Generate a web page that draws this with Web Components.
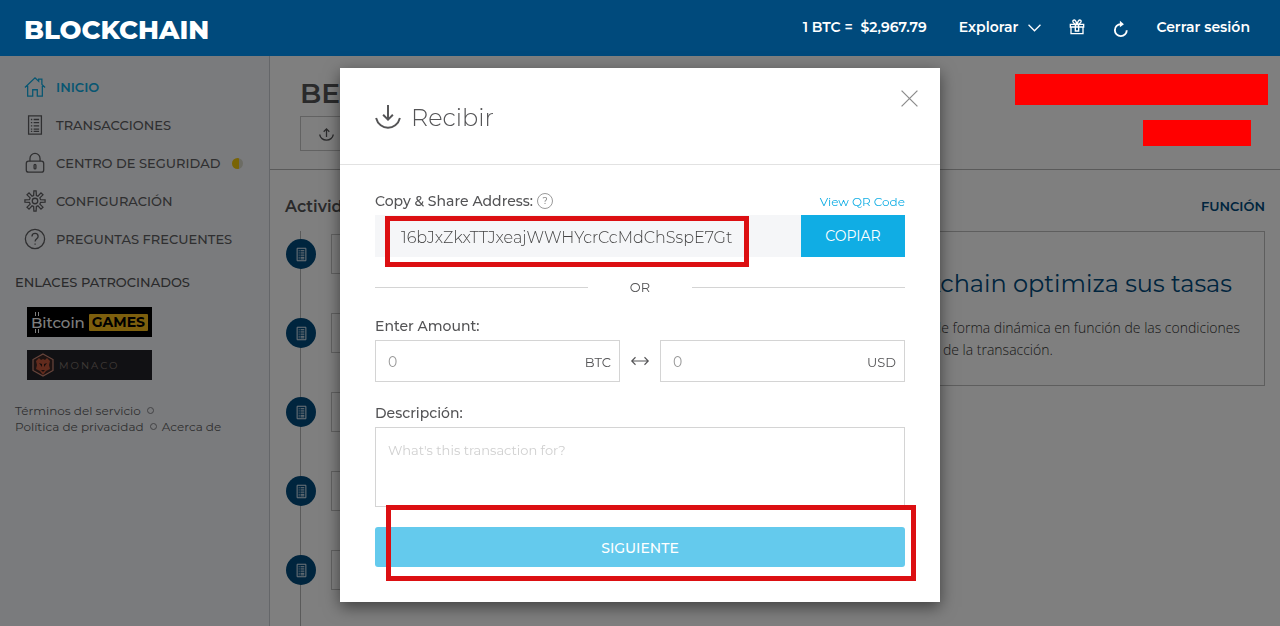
<!DOCTYPE html>
<html lang="es">
<head>
<meta charset="utf-8">
<meta name="viewport" content="width=device-width, initial-scale=1">
<title>Blockchain Wallet</title>
<style>
  html, body { margin: 0; height: 100%; }
  body {
    font-family: Montserrat, Inter, "Liberation Sans", sans-serif;
    font-size: 14px;
    color: #545456;
    background: #fff;
    overflow: hidden;
  }
</style>
</head>
<body>
<wallet-app></wallet-app>

<script>
const define = (name, markup, setup) => {
  const template = document.createElement('template');
  template.innerHTML = '<style>*,*::before{box-sizing:border-box}</style>' + markup;
  customElements.define(name, class extends HTMLElement {
    constructor() {
      super();
      this.attachShadow({ mode: 'open' }).append(template.content.cloneNode(true));
    }
    connectedCallback() { if (setup) setup(this, this.shadowRoot); }
  });
};

const icons = {
  home: '<path d="M1 12.500 12 2l4 3.800V3.500h3.500v5.600L23 12.500M4 10.500V22h5.500v-7h5v7H20V10.500"/>',
  list: '<path d="M5 2h14v20H5z"/><path d="M7.500 6H9m1.500 0h6M7.500 9.500H9m1.500 0h6M7.500 13H9m1.500 0h6M7.500 16.500H9m1.500 0h6M7.500 19h1.500m1.500 0h6"/>',
  lock: '<rect x="2.500" y="10" width="19" height="12" rx="2.500"/><path d="M6.500 10V7a5.500 5.500 0 0 1 11 0v3"/><rect x="11" y="13.500" width="2" height="5" rx="1"/>',
  gear: '<circle cx="12" cy="12" r="3"/><path d="M10.500 6 10.800 1h2.400l.3 5 1.700.7 3.300-3.600 2.200 2.200-3.400 3.300.8 1.900 4.900.3v2.400l-4.900.3-.8 1.900 3.400 3.300-2.200 2.200-3.300-3.600-1.700.7-.3 5h-2.400l-.3-5-1.700-.7-3.300 3.600-2.200-2.200 3.400-3.300-.8-1.900L1 13.200v-2.400l4.900-.3.8-1.900-3.400-3.300 2.200-2.200 3.300 3.600z"/>',
  help: '<circle cx="12" cy="12" r="10.500"/><path d="M8.700 9.200c0-4.300 6.700-4.300 6.700 0 0 2.500-3.300 2.600-3.300 5.600M12.100 17v1.200"/>',
  receive: '<path d="M1 12c3 12 19 12 22 0M12 0v13M7.500 9 12 13.500 16.500 9"/>',
  send: '<path d="M1 12c3 12 19 12 22 0M12 16V3M7.500 7.500 12 3l4.500 4.500"/>',
  close: '<path d="M2 2l20 20M22 2 2 22"/>',
  chevron: '<path d="M1 7l11 11L23 7"/>',
  gift: '<path d="M2 8h20v4H2zM3 12v10h18V12M9.500 8v10h5V8M12 8C6 8 4 2 7.500 1.500 10 1 12 8 12 8s2-7 4.500-6.500C20 2 18 8 12 8"/>',
  refresh: '<path d="M22 13a9.500 9.500 0 1 1-9.500-9.500"/><path d="M11 -2v10.500l6.500-5z" fill="currentColor" stroke="none"/>',
  swap: '<path d="M1 12h22M6 7l-5 5 5 5M18 7l5 5-5 5"/>'
};

/* Line icon; size and stroke come from custom properties. */
define('ui-icon', `
  <style>
    :host { display: inline-block; flex: none; width: var(--size, 24px); height: var(--size, 24px); }
    svg { display: block; width: 100%; height: 100%; fill: none; stroke: currentColor; stroke-width: var(--stroke, 1.5); overflow: visible; }
  </style>
  <svg viewBox="0 0 24 24" aria-hidden="true"></svg>`,
  (el, root) => { root.querySelector('svg').innerHTML = icons[el.getAttribute('name')]; });

define('top-bar', `
  <style>
    :host { display: block; position: relative; z-index: 20; background: #004a7c; color: #fff; }
    header { display: flex; align-items: center; justify-content: space-between; height: 56px; padding: 0 30px 0 24px; }
    a { color: inherit; text-decoration: none; }
    .logo { font-size: 26px; font-weight: 800; line-height: 32px; padding-top: 4px; }
    nav { display: flex; align-items: center; font-weight: 600; padding-bottom: 2px; }
    .rate { margin-right: 32px; white-space: pre; }
    button { display: flex; align-items: center; gap: 10px; padding: 0; border: 0; background: none; color: inherit; font: inherit; cursor: pointer; }
    .explore { margin-right: 28px; }
    .gift { margin-right: 28px; }
    .refresh { margin-right: 28px; padding-top: 4px; }
  </style>
  <header>
    <a class="logo" href="#">BLOCKCHAIN</a>
    <nav>
      <span class="rate">1 BTC =  $2,967.79</span>
      <button class="explore">Explorar <ui-icon name="chevron" style="--size:13px;--stroke:2.400"></ui-icon></button>
      <button class="gift" aria-label="Novedades"><ui-icon name="gift" style="--size:16px;--stroke:2"></ui-icon></button>
      <button class="refresh" aria-label="Actualizar"><ui-icon name="refresh" style="--size:15px;--stroke:3"></ui-icon></button>
      <a href="#">Cerrar sesión</a>
    </nav>
  </header>`);

define('nav-item', `
  <style>
    :host { display: block; color: #5f5f62; font-size: 13px; white-space: nowrap; }
    :host([active]) { color: #10ade4; }
    a { display: flex; align-items: center; gap: 10px; height: 38px; color: inherit; text-decoration: none; font-weight: 500; }
    :host([active]) a { font-weight: 600; }
    ui-icon { --size: 22px; --stroke: 1.400; }
  </style>
  <a href="#"><ui-icon></ui-icon><slot></slot></a>`,
  (el, root) => {
    const icon = root.querySelector('ui-icon');
    icon.shadowRoot.querySelector('svg').innerHTML = icons[el.getAttribute('icon')];
  });

define('side-bar', `
  <style>
    :host { display: block; background: #f5f7fb; border-right: 1px solid #c9ccd2; padding: 12px 14px 0 15px; }
    nav { padding-left: 9px; }
    .dot { width: 11px; height: 11px; border-radius: 50%; margin-left: 2px; background: linear-gradient(90deg, #f2c80c 65%, #d8d8c8 65%); }
    h2 { margin: 14px 0 15px; font-size: 13px; line-height: 20px; font-weight: 500; color: #545456; }
    .ads { display: flex; flex-direction: column; gap: 13px; padding-left: 12px; }
    .ads a { display: flex; align-items: center; width: 125px; height: 30px; text-decoration: none; background: #000; color: #fff; }
    .games { justify-content: space-between; padding: 0 4px; font-size: 15px; font-weight: 500; }
    .coin { padding: 1px 0;
      background: linear-gradient(#fff, #fff) 4px 0 / 1px 4px no-repeat, linear-gradient(#fff, #fff) 7px 0 / 1px 4px no-repeat,
        linear-gradient(#fff, #fff) 4px 100% / 1px 4px no-repeat, linear-gradient(#fff, #fff) 7px 100% / 1px 4px no-repeat; }
    .games b { background: #fabf1a; color: #000; font-size: 14px; line-height: 17px; padding: 0 3px; font-weight: 700; border-radius: 1px; }
    .ads .monaco { background: #222328; color: #837670; gap: 5px; padding-left: 5px; font-size: 10px; letter-spacing: 2px; }
    svg { flex: none; display: block; }
    footer { margin-top: 23px; font-size: 12px; line-height: 16px; color: #5f5f62; }
    footer a { color: inherit; text-decoration: none; }
    footer i { display: inline-block; width: 7px; height: 7px; border: 1px solid #85858a; border-radius: 50%; margin: 0 5px 1px 3px; }
  </style>
  <nav>
    <nav-item icon="home" active>INICIO</nav-item>
    <nav-item icon="list">TRANSACCIONES</nav-item>
    <nav-item icon="lock">CENTRO DE SEGURIDAD<span class="dot"></span></nav-item>
    <nav-item icon="gear">CONFIGURACIÓN</nav-item>
    <nav-item icon="help">PREGUNTAS FRECUENTES</nav-item>
  </nav>
  <h2>ENLACES PATROCINADOS</h2>
  <div class="ads">
    <a class="games" href="#"><span class="coin">Bitcoin</span><b>GAMES</b></a>
    <a class="monaco" href="#">
      <svg width="22" height="24" viewBox="0 0 22 24" aria-hidden="true">
        <path d="M11 1l10 5.500v11L11 23 1 17.500v-11z" fill="#3a2624" stroke="#d08a78" stroke-width="1.200"/>
        <path d="M4 8l3-3 2 2 2-1 2 1 2-2 3 3-1 4 1 4-4 2-3 4-3-4-4-2 1-4z" fill="#c4573b"/>
        <path d="M7 10l3 1v3zM15 10l-3 1v3zM9 17h4l-2 2z" fill="#2a1a18"/>
      </svg>
      <span>MONACO</span>
    </a>
  </div>
  <footer>
    <a href="#">Términos del servicio</a> <i></i><br>
    <a href="#">Política de privacidad</a> <i></i><a href="#">Acerca de</a>
  </footer>`);

/* Timeline of recent transactions. */
define('activity-feed', `
  <style>
    :host { display: block; flex: 1; min-height: 0; }
    ul { display: flex; flex-direction: column; gap: 39px; list-style: none; margin: 0; padding: 3px 0 0 1px; height: 100%;
      background: linear-gradient(#b4b4b4, #b4b4b4) 15px 0 / 1px 100% no-repeat; }
    li { display: flex; align-items: center; gap: 15px; }
    .badge { display: grid; place-items: center; width: 30px; height: 30px; border-radius: 50%; background: #004a7c; color: #e4eef6; }
    .entry { flex: 1; height: 40px; border: 1px solid #c4c4c4; }
    ui-icon { --size: 15px; --stroke: 1.600; }
  </style>
  <ul></ul>`,
  (el, root) => {
    root.querySelector('ul').innerHTML =
      '<li><span class="badge"><ui-icon name="list"></ui-icon></span><span class="entry"></span></li>'.repeat(5);
  });

define('feature-card', `
  <style>
    :host { display: flex; flex-direction: column; align-items: flex-end; height: 155px; padding: 36px 24px 0 0; border: 1px solid #bcbcbc; }
    ::slotted(h2) { margin: 0 8px 0 0; font-size: 24px; line-height: 32px; font-weight: 400; color: #004a7c; white-space: nowrap; }
    ::slotted(p) { margin: 17px 0 0; font-family: "Open Sans", sans-serif; font-weight: 300; font-size: 14px; line-height: 22px; color: #333; white-space: nowrap; }
  </style>
  <slot></slot>`);

define('home-view', `
  <style>
    :host { display: flex; flex-direction: column; min-width: 0; }
    .head { display: flex; justify-content: space-between; height: 114px; padding: 18px 12px 0 30px; border-bottom: 1px solid #b4b4b4; }
    h1 { margin: 0 0 4px; font-size: 28px; line-height: 38px; font-weight: 600; }
    .send { display: flex; align-items: center; width: 120px; height: 35px; padding: 2px 0 0 18px; border: 1px solid #c4c4c4; background: none; color: inherit; }
    .send ui-icon { --size: 15px; --stroke: 2; }
    .balance { display: flex; flex-direction: column; align-items: flex-end; gap: 15px; position: relative; z-index: 11; }
    .balance span { background: #f00; }
    .total { width: 253px; height: 31px; }
    .fiat { width: 108px; height: 26px; margin-right: 17px; }
    .body { flex: 1; display: grid; grid-template-columns: 1fr 1fr; gap: 30px; padding: 24px 15px 0 15px; min-height: 0; }
    section { display: flex; flex-direction: column; min-width: 0; }
    .title { margin: 0 0 12px; font-size: 16px; line-height: 25px; font-weight: 600; }
    .right .title { text-align: right; font-size: 13px; color: #004a7c; font-weight: 600; }
  </style>
  <div class="head">
    <div>
      <h1>BE</h1>
      <button class="send" aria-label="Enviar"><ui-icon name="send"></ui-icon></button>
    </div>
    <div class="balance"><span class="total"></span><span class="fiat"></span></div>
  </div>
  <div class="body">
    <section>
      <h2 class="title">Actividad</h2>
      <activity-feed></activity-feed>
    </section>
    <section class="right">
      <h2 class="title">FUNCIÓN</h2>
      <feature-card>
        <h2>Blockchain optimiza sus tasas</h2>
        <p>de forma dinámica en función de las condiciones<br>y de la transacción.</p>
      </feature-card>
    </section>
  </div>`);

define('amount-field', `
  <style>
    :host { display: block; flex: 1; min-width: 0; }
    label { display: flex; align-items: center; height: 42px; border: 1px solid #d4d4d4; padding: 2px 8px 0 12px; font-size: 13px; }
    input { flex: 1; min-width: 0; border: 0; padding: 0; outline: 0; background: none; font: inherit; font-size: 14px; color: #545456; }
    input::placeholder { color: #9a9a9a; }
  </style>
  <label><input type="text" inputmode="decimal" placeholder="0"><slot></slot></label>`);

/* Thick red frame around the part of the form being explained. */
define('highlight-frame', `
  <style>:host { display: block; position: absolute; box-sizing: border-box; border: 5px solid #dc0f12; pointer-events: none; }</style>`);

define('receive-dialog', `
  <style>
    :host { display: block; width: 600px; max-width: 100%; background: #fff; box-shadow: 0 5px 15px rgba(0,0,0,.5); }
    header { display: flex; justify-content: space-between; align-items: flex-start; padding: 20px 20px 29px 35px; border-bottom: 1px solid #e2e2e2; }
    h1 { display: flex; align-items: center; gap: 10px; margin: 12px 0 0; font-size: 24px; line-height: 35px; font-weight: 300; }
    h1 ui-icon { --size: 26px; --stroke: 1.800; }
    button { font: inherit; border: 0; padding: 0; cursor: pointer; }
    .close { display: flex; padding: 1px; background: none; color: #8c8c8c; }
    .close ui-icon { --size: 19px; --stroke: 1.600; }
    form { padding: 26px 35px 35px; }
    a { color: #10ade4; text-decoration: none; font-size: 12px; }
    .row { display: flex; align-items: center; justify-content: space-between; height: 20px; margin-bottom: 4px; }
    .label { display: block; font-size: 14px; line-height: 20px; font-weight: 500; margin-bottom: 4px; }
    .row .label { display: flex; align-items: center; gap: 4px; margin: 0; }
    .hint { width: 16px; height: 16px; border: 1px solid #9a9a9a; border-radius: 50%; background: none; color: #8c8c8c; font-size: 9px; line-height: 14px; }
    .address { position: relative; display: flex; height: 42px; }
    .address input { flex: 1; min-width: 0; border: 0; padding: 3px 0 0 26px; background: #f5f6f8; font: inherit; font-size: 16px; font-weight: 300; color: #444; outline: 0; }
    .address button { width: 104px; background: #10ade4; color: #fff; }
    .address highlight-frame { left: 10px; top: 1px; width: 364px; height: 51px; }
    .or { display: flex; align-items: center; gap: 42px; margin: 20px 0 19px; line-height: 20px; font-size: 13px; }
    .or::before, .or::after { content: ""; flex: 1; height: 1px; background: #d4d4d4; }
    .amounts { display: flex; align-items: center; }
    .amounts ui-icon { --size: 18px; --stroke: 1.500; margin: 0 11px; }
    .desc { margin-top: 21px; }
    textarea { display: block; width: 100%; height: 80px; padding: 12px 12px; border: 1px solid #d4d4d4; resize: none; outline: 0; font: inherit; font-size: 13px; line-height: 20px; }
    textarea::placeholder { color: #d0d0d0; }
    .submit { position: relative; margin-top: 20px; }
    .submit button { display: block; width: 100%; height: 40px; padding-top: 2px; border-radius: 3px; background: #64caed; color: #fff; font-weight: 500; }
    .submit highlight-frame { left: 11px; top: -22px; width: 530px; height: 76px; }
  </style>
  <header>
    <h1><ui-icon name="receive"></ui-icon>Recibir</h1>
    <button class="close" aria-label="Cerrar"><ui-icon name="close"></ui-icon></button>
  </header>
  <form>
    <div class="row">
      <div class="label"><label for="address">Copy &amp; Share Address:</label><button type="button" class="hint">?</button></div>
      <a href="#">View QR Code</a>
    </div>
    <div class="address">
      <input id="address" readonly value="16bJxZkxTTJxeajWWHYcrCcMdChSspE7Gt">
      <button type="button">COPIAR</button>
      <highlight-frame></highlight-frame>
    </div>
    <div class="or">OR</div>
    <div class="label">Enter Amount:</div>
    <div class="amounts">
      <amount-field>BTC</amount-field>
      <ui-icon name="swap"></ui-icon>
      <amount-field>USD</amount-field>
    </div>
    <label class="label desc" for="description">Descripción:</label>
    <textarea id="description" placeholder="What's this transaction for?"></textarea>
    <div class="submit">
      <button type="button">SIGUIENTE</button>
      <highlight-frame></highlight-frame>
    </div>
  </form>`);

define('wallet-app', `
  <style>
    :host { display: flex; flex-direction: column; height: 100vh; }
    main { flex: 1; display: grid; grid-template-columns: 270px 1fr; min-height: 0; }
    .backdrop { position: fixed; inset: 0; z-index: 10; background: rgba(0,0,0,.5); }
    .modal { position: fixed; inset: 0; z-index: 30; display: flex; justify-content: center; align-items: flex-start; padding-top: 68px; pointer-events: none; }
    receive-dialog { pointer-events: auto; }
  </style>
  <top-bar></top-bar>
  <main>
    <side-bar></side-bar>
    <home-view></home-view>
  </main>
  <div class="backdrop"></div>
  <div class="modal" role="dialog" aria-label="Recibir"><receive-dialog></receive-dialog></div>`);
</script>
</body>
</html>
